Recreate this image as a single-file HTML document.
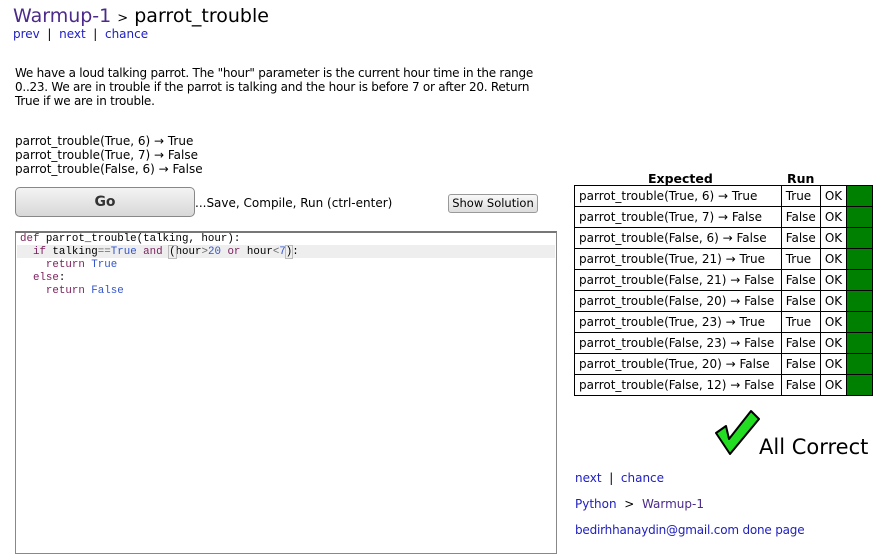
<!DOCTYPE html>
<html><head><style>
body{margin:0;width:895px;height:543px;overflow:hidden;background:#fff;font-family:"DejaVu Sans","Liberation Sans",sans-serif;font-size:12px;color:#000;position:relative}
.a{position:absolute;white-space:nowrap}
.code{font-family:"Liberation Mono",monospace;font-size:10.8px;line-height:13px}
table{border-collapse:collapse}
td{border:1px solid #000;padding:0 4px;height:20px;font-size:12px}
</style></head><body>
<div class="a" style="left:13px;top:5px;font-size:19px"><span style="color:#4b2a8a">Warmup-1</span> <span style="font-size:13px">&gt;</span> parrot_trouble</div>
<div class="a" style="left:13px;top:27px;color:#2020c0">prev &nbsp;<span style="color:#000">|</span>&nbsp; next &nbsp;<span style="color:#000">|</span>&nbsp; chance</div>
<div class="a" style="left:15px;top:66px;white-space:normal;width:536px;line-height:14px;letter-spacing:-0.25px">We have a loud talking parrot. The "hour" parameter is the current hour time in the range 0..23. We are in trouble if the parrot is talking and the hour is before 7 or after 20. Return True if we are in trouble.</div>
<div class="a" style="left:15px;top:134px;line-height:14px">parrot_trouble(True, 6) → True<br>parrot_trouble(True, 7) → False<br>parrot_trouble(False, 6) → False</div>
<div class="a" style="left:15px;top:187px;width:178px;height:28px;border:1px solid #888;border-radius:5px;background:linear-gradient(#f4f4f4,#d8d8d8);text-align:center;line-height:28px;font-weight:bold;font-size:14px;color:#333">Go</div>
<div class="a" style="left:195px;top:196px">...Save, Compile, Run (ctrl-enter)</div>
<div class="a" style="left:448px;top:194px;width:88px;height:17px;border:1px solid #999;border-radius:3px;background:linear-gradient(#f8f8f8,#ddd);text-align:center;line-height:17px;font-size:11.5px">Show Solution</div>
<div class="a" style="left:15px;top:231px;width:540px;height:320px;border:1px solid #888;border-top:2px solid #777"></div>
<div class="a" style="left:17px;top:245px;width:538px;height:13px;background:#eee"></div>
<div class="a code" style="left:20px;top:233px">
<div><span style="color:#7a1f5c">def</span> parrot_trouble(talking, hour):</div>
<div>&nbsp;&nbsp;<span style="color:#7a1f5c">if</span> talking<span style="color:#686868">==</span><span style="color:#3355cc">True</span> <span style="color:#7a1f5c">and</span> <span style="outline:1px solid #bbb">(</span>hour<span style="color:#686868">&gt;</span><span style="color:#3355cc">20</span> <span style="color:#7a1f5c">or</span> hour<span style="color:#686868">&lt;</span><span style="color:#3355cc">7</span><span style="outline:1px solid #bbb">)</span>:</div>
<div>&nbsp;&nbsp;&nbsp;&nbsp;<span style="color:#7a1f5c">return</span> <span style="color:#3355cc">True</span></div>
<div>&nbsp;&nbsp;<span style="color:#7a1f5c">else</span>:</div>
<div>&nbsp;&nbsp;&nbsp;&nbsp;<span style="color:#7a1f5c">return</span> <span style="color:#3355cc">False</span></div>
</div>
<div class="a" style="left:648px;top:171px;font-weight:bold;font-size:12.5px">Expected</div>
<div class="a" style="left:787px;top:171px;font-weight:bold;font-size:12.5px">Run</div>
<table class="a" style="left:574px;top:185px;width:299px">
<tr><td style="width:198px">parrot_trouble(True, 6) → True</td><td>True</td><td>OK</td><td style="background:#008000;width:19px"></td></tr>
<tr><td>parrot_trouble(True, 7) → False</td><td>False</td><td>OK</td><td style="background:#008000"></td></tr>
<tr><td>parrot_trouble(False, 6) → False</td><td>False</td><td>OK</td><td style="background:#008000"></td></tr>
<tr><td>parrot_trouble(True, 21) → True</td><td>True</td><td>OK</td><td style="background:#008000"></td></tr>
<tr><td>parrot_trouble(False, 21) → False</td><td>False</td><td>OK</td><td style="background:#008000"></td></tr>
<tr><td>parrot_trouble(False, 20) → False</td><td>False</td><td>OK</td><td style="background:#008000"></td></tr>
<tr><td>parrot_trouble(True, 23) → True</td><td>True</td><td>OK</td><td style="background:#008000"></td></tr>
<tr><td>parrot_trouble(False, 23) → False</td><td>False</td><td>OK</td><td style="background:#008000"></td></tr>
<tr><td>parrot_trouble(True, 20) → False</td><td>False</td><td>OK</td><td style="background:#008000"></td></tr>
<tr><td>parrot_trouble(False, 12) → False</td><td>False</td><td>OK</td><td style="background:#008000"></td></tr>
</table>
<svg class="a" style="left:712px;top:408px" width="48" height="50"><polygon points="4,25 14,18 17,31 39,3 47,11 18,46" fill="#22dd22" stroke="#000" stroke-width="2" stroke-linejoin="round"/></svg>
<div class="a" style="left:759px;top:435px;font-size:21px">All Correct</div>
<div class="a" style="left:575px;top:471px;color:#2020c0">next &nbsp;<span style="color:#000">|</span>&nbsp; chance</div>
<div class="a" style="left:575px;top:497px;color:#2020c0">Python &nbsp;<span style="color:#000">&gt;</span>&nbsp; <span style="color:#4b2a8a">Warmup-1</span></div>
<div class="a" style="left:575px;top:523px;color:#2020c0;letter-spacing:-0.2px">bedirhhanaydin@gmail.com done page</div>
</body></html>
